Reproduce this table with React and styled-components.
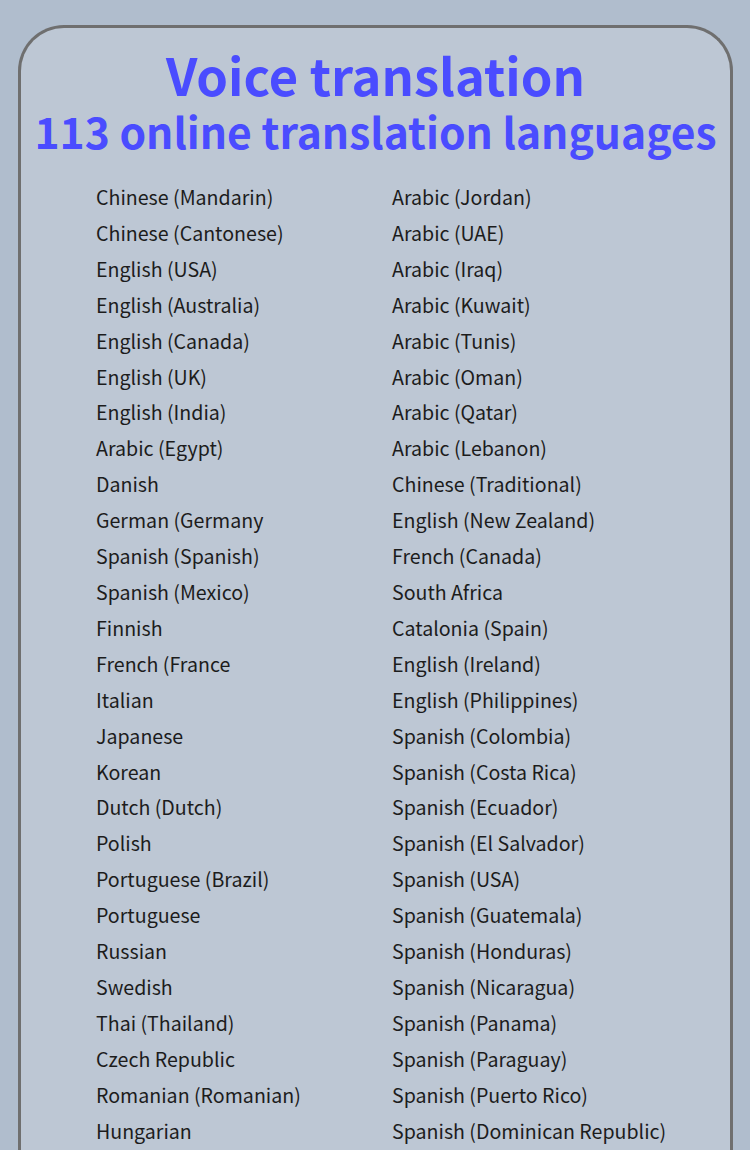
import React from 'react';
import styled, { createGlobalStyle } from 'styled-components';

const GlobalStyle = createGlobalStyle`
  html, body {
    margin: 0;
    padding: 0;
    background: #b0bdcd;
  }
  body {
    font-family: "Noto Sans CJK SC", "Noto Sans", sans-serif;
  }
`;

const Page = styled.div`
  width: 750px;
  height: 1150px;
  overflow: hidden;
  padding: 25px 17px 0 18px;
  box-sizing: border-box;
`;

const Card = styled.div`
  background: #bdc7d4;
  border: 3px solid #6f6f6f;
  border-bottom: none;
  border-radius: 46px 46px 0 0;
  height: 1200px;
  box-sizing: border-box;
  padding-top: 16px;
`;

const Title = styled.h1`
  margin: 0;
  text-align: center;
  color: #4a4cff;
  font-weight: 700;
  font-size: ${p => p.$size}px;
  line-height: ${p => p.$lh}px;
  white-space: nowrap;
`;

const Columns = styled.div`
  display: grid;
  grid-template-columns: 296px 1fr;
  padding: 21px 0 0 75px;
`;

const Column = styled.ul`
  list-style: none;
  margin: 0;
  padding: 0;
`;

const Item = styled.li`
  font-size: 19.6px;
  line-height: 35.9px;
  color: #1c1c1c;
  white-space: nowrap;
`;

const left = [
  'Chinese (Mandarin)', 'Chinese (Cantonese)', 'English (USA)', 'English (Australia)',
  'English (Canada)', 'English (UK)', 'English (India)', 'Arabic (Egypt)', 'Danish',
  'German (Germany', 'Spanish (Spanish)', 'Spanish (Mexico)', 'Finnish', 'French (France',
  'Italian', 'Japanese', 'Korean', 'Dutch (Dutch)', 'Polish', 'Portuguese (Brazil)',
  'Portuguese', 'Russian', 'Swedish', 'Thai (Thailand)', 'Czech Republic',
  'Romanian (Romanian)', 'Hungarian',
];

const right = [
  'Arabic (Jordan)', 'Arabic (UAE)', 'Arabic (Iraq)', 'Arabic (Kuwait)', 'Arabic (Tunis)',
  'Arabic (Oman)', 'Arabic (Qatar)', 'Arabic (Lebanon)', 'Chinese (Traditional)',
  'English (New Zealand)', 'French (Canada)', 'South Africa', 'Catalonia (Spain)',
  'English (Ireland)', 'English (Philippines)', 'Spanish (Colombia)', 'Spanish (Costa Rica)',
  'Spanish (Ecuador)', 'Spanish (El Salvador)', 'Spanish (USA)', 'Spanish (Guatemala)',
  'Spanish (Honduras)', 'Spanish (Nicaragua)', 'Spanish (Panama)', 'Spanish (Paraguay)',
  'Spanish (Puerto Rico)', 'Spanish (Dominican Republic)',
];

export default function App() {
  return (
    <Page>
      <GlobalStyle />
      <Card>
        <Title $size={50.7} $lh={60}>Voice translation</Title>
        <Title $size={42.6} $lh={54}>113 online translation languages</Title>
        <Columns>
          <Column>
            {left.map(l => <Item key={l}>{l}</Item>)}
          </Column>
          <Column>
            {right.map(l => <Item key={l}>{l}</Item>)}
          </Column>
        </Columns>
      </Card>
    </Page>
  );
}
